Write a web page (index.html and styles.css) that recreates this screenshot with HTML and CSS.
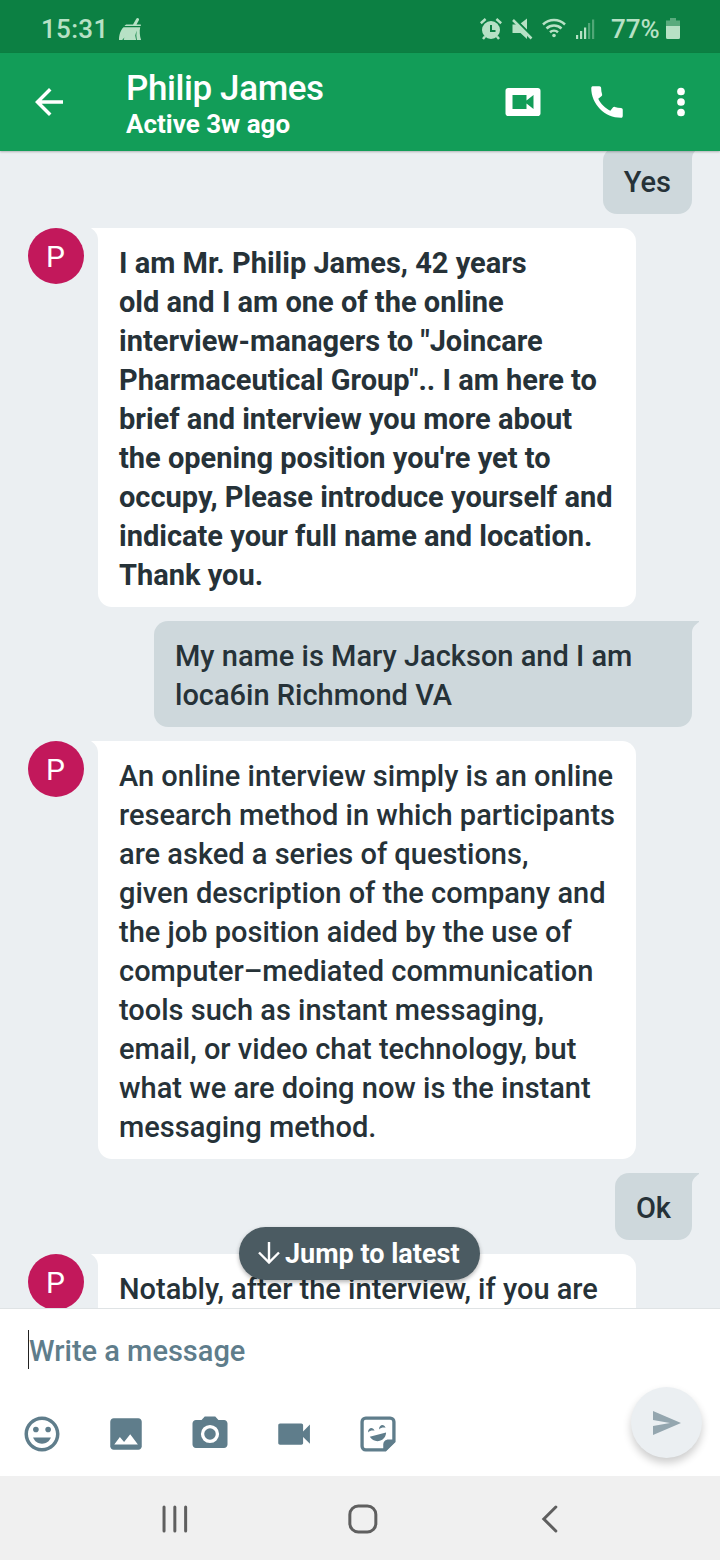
FILE: index.html
```
<!DOCTYPE html>
<html lang="en">

<head>
    <meta charset="UTF-8">
    <meta name="viewport" content="width=device-width, initial-scale=1.0">
    <title>Philip James</title>
    <link rel="stylesheet" href="styles.css">
</head>

<body>
    <div class="status-bar">
        <span class="clock">15:31</span>
        <svg class="broom" width="24" height="24" viewBox="0 0 24 24">
            <path d="M15 7.500l3.300-5.700a1.500 1.500 0 0 1 2.700 1.300l-2.500 4.400h4.300v1.600H6.500c.5-1 1.300-1.600 2.300-1.600z" />
            <path d="M5.600 10.300h16.600c-.9 3.500-.4 9 .9 12.700h-4.300l-.5-4.500.3-5-1.300 5 .8 4.500H5.600l.8-2.400L4.200 23H1c0-5 1.500-10 4.600-12.700z" />
        </svg>
        <div class="status-icons">
            <svg width="22" height="22" viewBox="0 0 22 22">
                <circle cx="11" cy="12" r="9" />
                <path d="M.8 5.200L5.600 1M21.200 5.200L16.400 1M5 18.500l-2 2.500M17 18.500l2 2.500" class="line" />
                <path d="M11 7v6h4.500" class="cut" />
            </svg>
            <svg width="22" height="22" viewBox="0 0 22 22">
                <path d="M1.500 6.500h4L16 17v4l-6.500-6H1.500zM9.500 5.500L16 .5v12z" />
                <path d="M3.500 .5L22 19" class="cut" />
                <path d="M2 2L20.500 20.500" class="line" />
            </svg>
            <svg width="24" height="22" viewBox="0 0 24 22">
                <path d="M1 6.500a16 16 0 0 1 22 0M4.500 10.500a11 11 0 0 1 15 0M8 14.300a6 6 0 0 1 8 0" class="line" />
                <circle cx="12" cy="17.500" r="1.800" />
            </svg>
            <svg width="20" height="22" viewBox="0 0 20 22">
                <path d="M1 17h2.200v4H1zM5 13h2.200v8H5zM9 9.500h2.200V21H9z" />
                <path d="M13 5h2.200v16H13zM17 1.500h2.200V21H17z" opacity=".4" />
            </svg>
            <span class="percent">77%</span>
            <svg width="14" height="22" viewBox="0 0 14 22">
                <path d="M4 0h6v2.500h4V8H0V2.500h4z" opacity=".45" />
                <path d="M0 8h14v11.500a1.500 1.500 0 0 1-1.500 1.500h-11A1.500 1.500 0 0 1 0 19.500z" />
            </svg>
        </div>
    </div>

    <header class="app-bar">
        <svg class="icon" viewBox="0 0 24 24">
            <path d="M20 11H7.830l5.590-5.590L12 4l-8 8 8 8 1.410-1.410L7.830 13H20v-2z" />
        </svg>
        <div class="contact">
            <h1>Philip James</h1>
            <p>Active 3w ago</p>
        </div>
        <div class="actions">
            <svg class="icon" viewBox="0 0 24 24">
                <path fill-rule="evenodd" d="M20.500 4h-17C2.670 4 2 4.670 2 5.500v13c0 .83.67 1.500 1.500 1.500h17c.83 0 1.500-.67 1.500-1.500v-13c0-.83-.67-1.500-1.500-1.500zM18 16l-4-3.200V16H6V8h8v3.200L18 8z" />
            </svg>
            <svg class="icon" viewBox="0 0 24 24">
                <path d="M20.010 15.380c-1.230 0-2.420-.2-3.530-.56-.35-.12-.74-.03-1.010.24l-1.570 1.970c-2.830-1.350-5.480-3.900-6.890-6.830l1.950-1.660c.27-.28.35-.67.240-1.020-.37-1.110-.56-2.300-.56-3.530 0-.54-.45-.99-.99-.99H4.190C3.650 3 3 3.240 3 3.990 3 13.280 10.730 21 20.010 21c.71 0 .99-.63.99-1.180v-3.450c0-.54-.45-.99-.99-.99z" />
            </svg>
            <svg class="icon" viewBox="0 0 24 24">
                <circle cx="12" cy="6" r="2.200" />
                <circle cx="12" cy="12" r="2.200" />
                <circle cx="12" cy="18" r="2.200" />
            </svg>
        </div>
    </header>

    <main class="chat">
        <div class="row out">
            <div class="bubble">Yes</div>
        </div>
        <div class="row in">
            <div class="avatar">P</div>
            <div class="bubble wide unread">I am Mr. Philip James, 42 years<br>
                old and I am one of the online<br>
                interview-managers to "Joincare<br>
                Pharmaceutical Group".. I am here to<br>
                brief and interview you more about<br>
                the opening position you're yet to<br>
                occupy, Please introduce yourself and<br>
                indicate your full name and location.<br>
                Thank you.</div>
        </div>
        <div class="row out">
            <div class="bubble wide">My name is Mary Jackson and I am<br>
                loca6in Richmond VA</div>
        </div>
        <div class="row in">
            <div class="avatar">P</div>
            <div class="bubble wide">An online interview simply is an online<br>
                research method in which participants<br>
                are asked a series of questions,<br>
                given description of the company and<br>
                the job position aided by the use of<br>
                computer–mediated communication<br>
                tools such as instant messaging,<br>
                email, or video chat technology, but<br>
                what we are doing now is the instant<br>
                messaging method.</div>
        </div>
        <div class="row out">
            <div class="bubble">Ok</div>
        </div>
        <div class="row in">
            <div class="avatar">P</div>
            <div class="bubble wide">Notably, after the interview, if you are</div>
        </div>
        <div class="jump">
            <svg width="22" height="22" viewBox="0 0 22 22">
                <path d="M11 0v20M1 10.500L11 20.500l10-10" />
            </svg>
            <span>Jump to latest</span>
        </div>
    </main>

    <section class="composer">
        <div class="field">Write a message</div>
        <div class="tools">
            <svg class="icon" viewBox="0 0 24 24">
                <path d="M11.990 2C6.470 2 2 6.480 2 12s4.470 10 9.990 10C17.520 22 22 17.520 22 12S17.520 2 11.990 2zM12 20c-4.420 0-8-3.580-8-8s3.580-8 8-8 8 3.580 8 8-3.580 8-8 8z" />
                <circle cx="8.500" cy="9.400" r="1.600" />
                <circle cx="15.500" cy="9.400" r="1.600" />
                <path d="M6.900 14h10.200c-.8 2.200-2.800 3.500-5.100 3.500S7.700 16.200 6.900 14z" />
            </svg>
            <svg class="icon" viewBox="0 0 24 24">
                <path d="M21 19V5c0-1.100-.9-2-2-2H5c-1.100 0-2 .9-2 2v14c0 1.100.9 2 2 2h14c1.100 0 2-.9 2-2z" />
                <path fill="#fff" d="M5.300 18l3.200-4.300 2.400 2.900 3.500-4.500 4.400 5.900z" />
            </svg>
            <svg class="icon" viewBox="0 0 24 24">
                <path fill-rule="evenodd" d="M9 2L7.170 4H4c-1.100 0-2 .9-2 2v12c0 1.100.9 2 2 2h16c1.100 0 2-.9 2-2V6c0-1.100-.9-2-2-2h-3.170L15 2H9zm3 15.200a5.200 5.200 0 1 1 0-10.400 5.200 5.200 0 0 1 0 10.400z" />
                <circle cx="12" cy="12" r="3.300" />
            </svg>
            <svg class="icon" viewBox="0 0 24 24">
                <path d="M17.200 10.500V7c0-.55-.45-1-1-1H4c-.55 0-1 .45-1 1v10.200c0 .55.45 1 1 1h12.200c.55 0 1-.45 1-1v-3.500l3.900 3.900V6.600l-3.900 3.900z" />
            </svg>
            <svg class="icon" viewBox="0 0 24 24">
                <path d="M5 2.900h14c1.200 0 2.100.9 2.100 2.100v11.200l-5 4.900H5c-1.200 0-2.100-.9-2.100-2.100V5c0-1.200.9-2.100 2.100-2.100z" fill="none" stroke="#5f7d8b" stroke-width="1.900" />
                <path d="M15 21.500v-3.300c0-1.800 1.200-3 3-3h3.500v1.500L16.600 21.500z" />
                <path d="M7.300 13.600l9.300-2.400c0 2.300-1.500 4.200-3.600 4.700-2.200.6-4.500-.4-5.700-2.300zM6.300 11.100c-.1-2.700 2.900-3.500 3.700-.9-.8-.5-2.700-.2-3.700.9zM12.600 9.400c-.1-2.700 2.900-3.500 3.700-.9-.8-.5-2.700-.2-3.700.9z" />
            </svg>
        </div>
        <div class="send">
            <svg width="28" height="24" viewBox="0 0 28 24">
                <path d="M0 0l28 12L0 24v-9l17-3L0 9z" />
            </svg>
        </div>
    </section>

    <nav class="nav-bar">
        <svg height="30" viewBox="0 0 28 30">
            <path d="M3.200 3v24M14 3v24M24.800 3v24" />
        </svg>
        <svg height="30" viewBox="0 0 30 30">
            <rect x="2" y="2" width="26" height="26" rx="8.500" />
        </svg>
        <svg height="30" viewBox="0 0 20 30">
            <path d="M16 3L4 15l12 12" />
        </svg>
    </nav>
</body>

</html>
```
FILE: styles.css
```
* {
    box-sizing: border-box;
}

body {
    font-family: Roboto, "Liberation Sans", sans-serif;
    margin: 0;
    width: 720px;
    height: 1560px;
    display: flex;
    flex-direction: column;
    overflow: hidden;
    color: #263238;
    background-color: #ffffff;
}

svg {
    display: block;
    flex: none;
}

h1,
p {
    margin: 0;
}

.icon {
    width: 42px;
    height: 42px;
}

/* status bar */
.status-bar {
    height: 53px;
    flex: none;
    display: flex;
    align-items: center;
    padding: 4px 40px 0 41px;
    background-color: #0c8043;
    color: #b7e1c5;
    fill: #b7e1c5;
    font-size: 26px;
    font-weight: 500;
}

.clock {
    width: 66px;
    letter-spacing: 0.3px;
}

.broom {
    margin-left: 11px;
}

.status-icons {
    margin-left: auto;
    display: flex;
    align-items: center;
    gap: 9px;
}

.status-icons .line {
    fill: none;
    stroke: #b7e1c5;
    stroke-width: 2.5;
}

.status-icons .cut {
    fill: none;
    stroke: #0c8043;
    stroke-width: 2;
}

.percent {
    width: 48px;
    margin: 0 -2px 0 7px;
}

/* app bar */
.app-bar {
    height: 98px;
    flex: none;
    display: flex;
    align-items: center;
    padding: 0 18px 0 28px;
    background-color: #129d58;
    color: #ffffff;
    fill: #ffffff;
    box-shadow: 0 1px 2px rgba(0, 0, 0, 0.25);
    z-index: 1;
}

.contact {
    margin-left: 56px;
    padding-top: 5px;
    white-space: nowrap;
}

.contact h1 {
    font-size: 35px;
    font-weight: 500;
    line-height: 40px;
    letter-spacing: -0.4px;
}

.contact p {
    font-size: 26px;
    font-weight: 700;
    line-height: 31px;
}

.actions {
    margin-left: auto;
    display: flex;
}

.actions .icon:nth-child(2) {
    margin: 0 32px 0 42px;
}

/* messages */
.chat {
    height: 1157px;
    flex: none;
    position: relative;
    display: flex;
    flex-direction: column;
    gap: 14px;
    padding: 0 28px;
    overflow: hidden;
    background-color: #ebeff2;
}

.row {
    display: flex;
    flex: none;
    align-items: flex-start;
    gap: 14px;
}

.row:first-child {
    margin-top: -4px;
}

.out {
    justify-content: flex-end;
}

.avatar {
    width: 56px;
    height: 56px;
    padding-right: 1px;
    border-radius: 50%;
    background-color: #c2185b;
    color: #ffffff;
    font-size: 30px;
    line-height: 57px;
    text-align: center;
}

.bubble {
    position: relative;
    padding: 16px 21px 12px;
    border-radius: 14px;
    font-size: 29px;
    font-weight: 500;
    line-height: 39px;
    white-space: nowrap;
}

.wide {
    width: 538px;
}

.unread {
    font-weight: 700;
}

.in .bubble {
    background-color: #ffffff;
    border-top-left-radius: 0;
}

.out .bubble {
    background-color: #ced8dc;
    border-top-right-radius: 0;
}

/* little tail on the upper corner */
.bubble::before {
    content: "";
    position: absolute;
    top: 0;
    width: 7px;
    height: 12px;
    background-color: inherit;
}

.in .bubble::before {
    left: -7px;
    clip-path: path("M0 0H7V12C7 6 4 3 0 0Z");
}

.out .bubble::before {
    right: -7px;
    clip-path: path("M7 0H0V12C0 6 3 4 7 1Z");
}

.jump {
    position: absolute;
    left: 239px;
    top: 1076px;
    width: 241px;
    height: 53px;
    display: flex;
    align-items: center;
    gap: 5px;
    padding: 1px 0 0 19px;
    border-radius: 27px;
    background-color: #4b5b62;
    color: #ffffff;
    font-size: 27px;
    font-weight: 700;
    white-space: nowrap;
    box-shadow: 0 2px 4px rgba(0, 0, 0, 0.3);
}

.jump svg {
    fill: none;
    stroke: #ffffff;
    stroke-width: 2.4;
    margin-top: -3px;
}

/* composer */
.composer {
    height: 168px;
    flex: none;
    position: relative;
    border-top: 1px solid #dfe3e5;
    background-color: #ffffff;
}

.field {
    height: 39px;
    margin: 21px 0 0 28px;
    border-left: 1px solid #222222;
    color: #5f7d8b;
    font-size: 29px;
    font-weight: 500;
    line-height: 43px;
}

.tools {
    display: flex;
    gap: 42px;
    padding: 44px 0 0 21px;
    fill: #5f7d8b;
}

.send {
    position: absolute;
    left: 631px;
    top: 78px;
    width: 71px;
    height: 71px;
    display: flex;
    align-items: center;
    padding-left: 22px;
    border-radius: 50%;
    background-color: #ebeff2;
    fill: #94a6af;
    box-shadow: 0 5px 8px rgba(0, 0, 0, 0.2);
}

/* system navigation */
.nav-bar {
    height: 84px;
    flex: none;
    display: flex;
    align-items: center;
    padding: 2px 76px 0 81px;
    background-color: #f0f0f0;
    fill: none;
    stroke: #5f5f5f;
    stroke-width: 3;
    stroke-linecap: round;
}

.nav-bar svg {
    flex: 1;
}
```
